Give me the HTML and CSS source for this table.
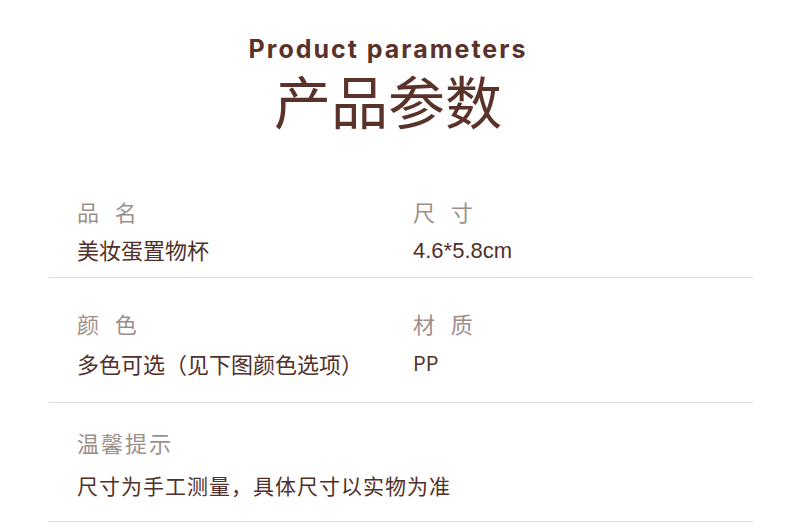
FILE: index.html
```html
<!DOCTYPE html>
<html lang="zh-CN">
<head>
  <meta charset="UTF-8">
  <title>产品参数</title>
  <link rel="stylesheet" href="styles.css">
</head>
<body>

  <div class="header">
    <div class="title-en">Product parameters</div>
    <div class="title-cn">产品参数</div>
  </div>

  <div class="params">
    <div class="row first">
      <div class="cell">
        <div class="label">品&nbsp;&nbsp;名</div>
        <div class="value">美妆蛋置物杯</div>
      </div>
      <div class="cell">
        <div class="label">尺&nbsp;&nbsp;寸</div>
        <div class="value latin">4.6*5.8cm</div>
      </div>
    </div>

    <div class="row">
      <div class="cell">
        <div class="label">颜&nbsp;&nbsp;色</div>
        <div class="value">多色可选（见下图颜色选项）</div>
      </div>
      <div class="cell">
        <div class="label">材&nbsp;&nbsp;质</div>
        <div class="value pp">PP</div>
      </div>
    </div>

    <div class="row tip">
      <div class="cell">
        <div class="label">温馨提示</div>
        <div class="value">尺寸为手工测量，具体尺寸以实物为准</div>
      </div>
    </div>
  </div>

</body>
</html>
```

FILE: styles.css
```css
body {
  margin: 0;
  background: #fff;
  font-family: "Noto Sans CJK SC", "Noto Sans", sans-serif;
  color: #52302a;
}
.header {
  text-align: center;
  padding: 34px 14px 0 0;
  color: #5a3229;
}
.title-en {
  font-family: Inter, "Noto Sans", sans-serif;
  font-weight: 700;
  font-size: 25px;
  line-height: 30px;
  letter-spacing: 2px;
}
.title-cn {
  font-size: 57px;
  line-height: 60px;
  margin-top: 5px;
  margin-bottom: 35px;
}
.params {
  margin: 0 37px 0 49px;
}
.row {
  display: grid;
  grid-template-columns: 336px 1fr;
  padding: 30px 0 24px 28px;
  border-bottom: 1px solid #dcdcdc;
}
.row.first {
  padding-top: 32px;
  padding-bottom: 13px;
}
.label {
  font-size: 22px;
  line-height: 30px;
  color: #9c8f8b;
  letter-spacing: 2px;
}
.value {
  font-size: 22px;
  line-height: 30px;
  margin-top: 10px;
}
.first .value {
  margin-top: 8px;
}
.first .latin {
  font-family: "Liberation Sans", Arial, sans-serif;
  padding-top: 3px;
  line-height: 27px;
}
.pp {
  font-size: 20px;
}
.row.tip {
  display: block;
  padding: 24px 0 21px 28px;
}
.tip .value {
  font-size: 21px;
  letter-spacing: 1px;
  margin-top: 13px;
}
```
